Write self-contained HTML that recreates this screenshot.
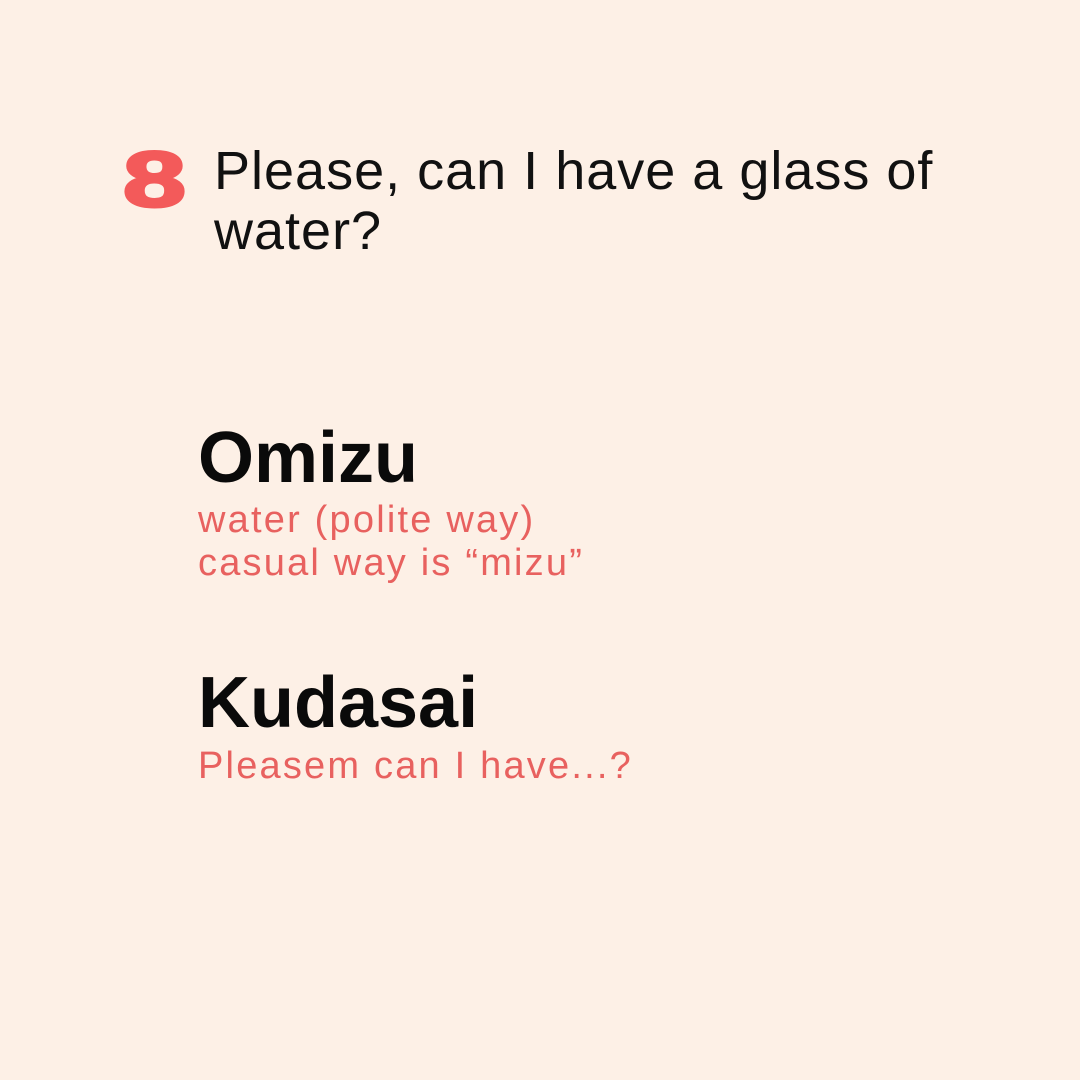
<!DOCTYPE html>
<html><head><style>
body{margin:0;width:1080px;height:1080px;background:#fdf0e6;font-family:"Liberation Sans",sans-serif;position:relative;overflow:hidden}
.a{position:absolute;white-space:nowrap}
.n{left:123px;top:140px;font-size:78px;font-weight:bold;color:#f35a5a;-webkit-text-stroke:3px #f35a5a;transform:scaleX(1.45);transform-origin:left top;line-height:1}
.t{left:214px;top:141px;font-size:54px;line-height:60px;color:#111;letter-spacing:1px}
.h{font-size:72px;font-weight:bold;color:#0a0a0a;line-height:1}
.s{font-size:38px;line-height:43px;color:#e8615f;letter-spacing:2.2px}
</style></head><body>
<div class="a n">8</div>
<div class="a t">Please, can I have a glass of<br>water?</div>
<div class="a h" style="left:198px;top:422px">Omizu</div>
<div class="a s" style="left:198px;top:499px">water (polite way)<br>casual way is “mizu”</div>
<div class="a h" style="left:198px;top:667px">Kudasai</div>
<div class="a s" style="left:198px;top:745px">Pleasem can I have...?</div>
</body></html>
